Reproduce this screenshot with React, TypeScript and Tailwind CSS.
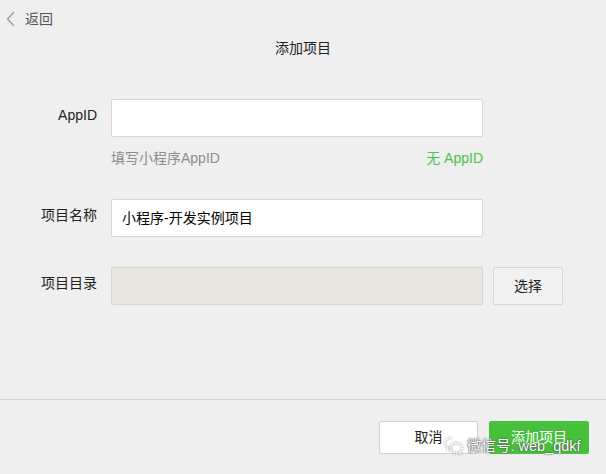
import React from 'react';

const font = 'font-["Liberation_Sans","Noto_Sans_CJK_SC",sans-serif]';

const Label: React.FC<{ text: string }> = ({ text }) => (
  <div className="w-[97px] shrink-0 text-right text-[14px] leading-5 pt-[6px] text-[#222]">{text}</div>
);

export default function App() {
  return (
    <div className={`${font} relative w-[606px] h-[474px] bg-[#efefef] flex flex-col overflow-hidden`}>
      {/* back */}
      <div className="h-[38px] flex items-center pl-[6px] gap-[10px] text-[#555] text-[14px]">
        <svg width="9" height="16" viewBox="0 0 9 16" fill="none">
          <path d="M8 1 L1.5 8 L8 15" stroke="#9a9a9a" strokeWidth="1.3" />
        </svg>
        <span>返回</span>
      </div>
      <div className="text-center text-[14px] leading-5 text-[#222]">添加项目</div>

      {/* form */}
      <div className="mt-[41px] flex flex-col">
        <div className="flex gap-[14px]">
          <Label text="AppID" />
          <div className="flex flex-col w-[372px]">
            <div className="h-[38px] bg-white border border-[#d6d6d6] rounded-[2px]" />
            <div className="mt-[11px] flex justify-between text-[14px] leading-5">
              <span className="text-[#8c8c8c]">填写小程序AppID</span>
              <span className="text-[#4cc04a]">无 AppID</span>
            </div>
          </div>
        </div>

        <div className="mt-[31px] flex gap-[14px]">
          <Label text="项目名称" />
          <div className="w-[372px] h-[38px] bg-white border border-[#d6d6d6] rounded-[2px] flex items-center px-[10px] text-[14px] text-black">
            小程序-开发实例项目
          </div>
        </div>

        <div className="mt-[30px] flex gap-[14px]">
          <Label text="项目目录" />
          <div className="w-[372px] h-[38px] bg-[#e8e8e1] border border-[#d6d6d6] rounded-[2px]" />
          <button className="ml-[-4px] w-[70px] h-[38px] bg-[#f2f2f2] border border-[#d6d6d6] rounded-[2px] text-[14px] text-[#222]">
            选择
          </button>
        </div>
      </div>

      <div className="mt-auto border-t border-[#d4d4d4] h-[75px] flex items-start justify-end gap-[11px] pt-[21px] pr-[17px]">
        <button className="w-[99px] h-[33px] bg-white border border-[#d0d0d0] rounded-[2px] text-[14px] text-[#222]">
          取消
        </button>
        <button className="w-[100px] h-[33px] bg-[#47c13c] rounded-[2px] text-[14px] text-white">
          添加项目
        </button>
      </div>

      {/* watermark */}
      <div className="absolute left-[444px] top-[435px] flex items-center gap-[3px]">
        <svg width="20" height="22" viewBox="0 0 20 22" fill="none" className="[filter:drop-shadow(0_0_1px_#666)]">
          <path d="M7 3 C3 3 1 6 1 8.5 C1 10.5 2.2 11.8 3.5 12.6 L3 15 L5.6 13.6 C6 13.7 6.5 13.8 7 13.8" stroke="white" strokeWidth="1.3" strokeDasharray="2 1.3" />
          <path d="M12 8 C8.5 8 6.5 10.5 6.5 13 C6.5 15.8 9 18 12 18 C12.8 18 13.5 17.9 14.2 17.6 L16.8 19 L16.2 16.6 C17.5 15.8 18.5 14.5 18.5 13 C18.5 10.5 15.8 8 12 8 Z" stroke="white" strokeWidth="1.3" strokeDasharray="2 1.3" />
        </svg>
        <span className="text-[14.5px] leading-5 text-white [text-shadow:0_0_2px_#444,0_0_1px_#444]">微信号: web_qdkf</span>
      </div>
    </div>
  );
}
